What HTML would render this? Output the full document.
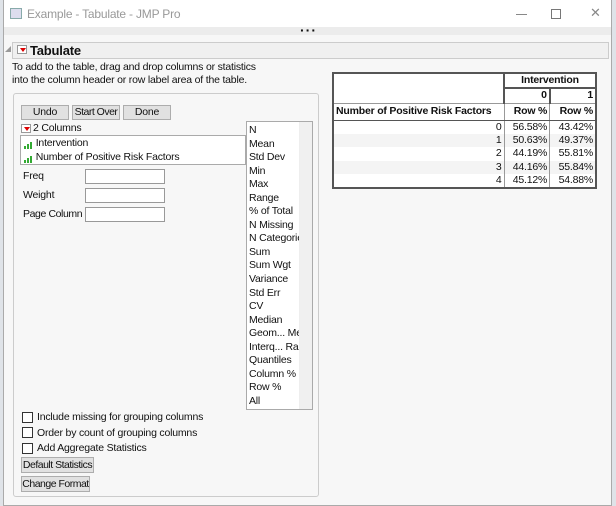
<!DOCTYPE html>
<html><head><style>
*{box-sizing:border-box;margin:0;padding:0}
body{width:616px;height:506px;overflow:hidden;background:#dfe3e8;font-family:"Liberation Sans",sans-serif;font-size:10.5px;color:#111;position:relative;letter-spacing:-0.2px}
.a{position:absolute;white-space:nowrap}
.win{left:3px;top:0;width:609px;height:506px;background:#f7f7f7;border:1px solid #aaa;border-top:none}
.btn{position:absolute;background:#e1e1e1;border:1px solid #adadad;text-align:center;line-height:13px;font-size:10.5px;white-space:nowrap;overflow:hidden}
.inp{position:absolute;background:#fff;border:1px solid #999;width:80px;height:15px;left:85px}
.cb{position:absolute;left:22px;width:11px;height:11px;border:1px solid #333;background:#fff}
.tri{position:absolute;width:10px;height:9px;background:#fff;border:1px solid #999}
.tri:after{content:"";position:absolute;left:1.5px;top:2px;border-left:3px solid transparent;border-right:3px solid transparent;border-top:4px solid #d00}
.bar{display:inline-block;vertical-align:bottom;background:#3a3;width:2px;margin-right:1px}
table{border-collapse:collapse;font-size:10.5px}
td{padding:0 2px;text-align:right;height:13.6px;line-height:13px;white-space:nowrap}
</style></head><body>
<div class="a win"></div>
<div class="a" style="left:4px;top:0;width:607px;height:27px;background:#fff"></div>
<div class="a" style="left:10px;top:8px;width:12px;height:11px;border:1px solid #8aa;background:#dde"></div>
<div class="a" style="left:27px;top:7px;color:#999;font-size:12px">Example - Tabulate - JMP Pro</div>
<div class="a" style="left:516px;top:14px;width:11px;height:1px;background:#888"></div>
<div class="a" style="left:551px;top:9px;width:10px;height:10px;border:1px solid #777"></div>
<div class="a" style="left:590px;top:5px;color:#888;font-size:13px">✕</div>
<div class="a" style="left:4px;top:27px;width:607px;height:8px;background:#ececec"></div>
<div class="a" style="left:300px;top:22px;font-size:14px;font-weight:bold;letter-spacing:1px">···</div>
<div class="a" style="left:5px;top:46px;border-left:6px solid transparent;border-bottom:6px solid #999;"></div>
<div class="a" style="left:12px;top:42px;width:597px;height:17px;background:#f0f0f0;border:1px solid #ccc"></div>
<div class="tri" style="left:17px;top:45px"></div>
<div class="a" style="left:30px;top:43px;font-weight:bold;font-size:13px">Tabulate</div>
<div class="a" style="left:12px;top:61px;line-height:13px">To add to the table, drag and drop columns or statistics<br>into the column header or row label area of the table.</div>
<div class="a" style="left:13px;top:93px;width:306px;height:404px;border:1px solid #ccc;border-radius:3px"></div>
<div class="btn" style="left:21px;top:105px;width:48px;height:15px">Undo</div>
<div class="btn" style="left:72px;top:105px;width:48px;height:15px;letter-spacing:-0.5px">Start Over</div>
<div class="btn" style="left:123px;top:105px;width:48px;height:15px">Done</div>
<div class="tri" style="left:21px;top:124px"></div>
<div class="a" style="left:33px;top:122px">2 Columns</div>
<div class="a" style="left:20px;top:135px;width:226px;height:30px;background:#fff;border:1px solid #aaa"></div>
<div class="a" style="left:24px;top:137px"><span class="bar" style="height:3px"></span><span class="bar" style="height:5px"></span><span class="bar" style="height:7px"></span> Intervention</div>
<div class="a" style="left:24px;top:151px"><span class="bar" style="height:3px"></span><span class="bar" style="height:5px"></span><span class="bar" style="height:7px"></span> Number of Positive Risk Factors</div>
<div class="a" style="left:23px;top:170px">Freq</div><div class="inp" style="top:169px"></div>
<div class="a" style="left:23px;top:189px">Weight</div><div class="inp" style="top:188px"></div>
<div class="a" style="left:23px;top:208px;letter-spacing:-0.4px">Page Column</div><div class="inp" style="top:207px"></div>
<div class="a" style="left:246px;top:121px;width:67px;height:289px;background:#fff;border:1px solid #aaa;overflow:hidden">
<div style="position:absolute;left:2px;top:2px;line-height:13.55px;white-space:nowrap">N<br>Mean<br>Std Dev<br>Min<br>Max<br>Range<br>% of Total<br>N Missing<br>N Categories<br>Sum<br>Sum Wgt<br>Variance<br>Std Err<br>CV<br>Median<br>Geom... Mean<br>Interq... Range<br>Quantiles<br>Column %<br>Row %<br>All</div>
<div style="position:absolute;right:0;top:0;width:13px;height:100%;background:#f0f0f0;border-left:1px solid #eee"></div>
</div>
<div class="cb" style="top:412px"></div><div class="a" style="left:37px;top:411px">Include missing for grouping columns</div>
<div class="cb" style="top:427px"></div><div class="a" style="left:37px;top:427px">Order by count of grouping columns</div>
<div class="cb" style="top:443px"></div><div class="a" style="left:37px;top:442px">Add Aggregate Statistics</div>
<div class="btn" style="left:21px;top:457px;width:73px;height:16px;line-height:14px;letter-spacing:-0.5px">Default Statistics</div>
<div class="btn" style="left:21px;top:476px;width:69px;height:16px;line-height:14px;letter-spacing:-0.5px">Change Format</div>
<table class="a" style="left:332px;top:72px;width:265px;border:2px solid #555;background:#fff">
<tr style="height:14px"><td rowspan="2" style="width:171px;border-right:2px solid #555;border-bottom:1px solid #999"></td><td colspan="2" style="text-align:center;font-weight:bold;border-bottom:2px solid #555">Intervention</td></tr>
<tr style="height:15px"><td style="font-weight:bold;border-right:2px solid #555;border-bottom:1px solid #999">0</td><td style="font-weight:bold;border-bottom:1px solid #999">1</td></tr>
<tr style="height:17px"><td style="text-align:left;font-weight:bold;border-right:1px solid #999;border-bottom:1px solid #555">Number of Positive Risk Factors</td><td style="font-weight:bold;border-right:1px solid #999;border-bottom:1px solid #555">Row %</td><td style="font-weight:bold;border-bottom:1px solid #555">Row %</td></tr>
<tr><td style="border-right:1px solid #999">0</td><td style="border-right:1px solid #999">56.58%</td><td>43.42%</td></tr>
<tr style="background:#f4f4f4"><td style="border-right:1px solid #999">1</td><td style="border-right:1px solid #999">50.63%</td><td>49.37%</td></tr>
<tr><td style="border-right:1px solid #999">2</td><td style="border-right:1px solid #999">44.19%</td><td>55.81%</td></tr>
<tr style="background:#f4f4f4"><td style="border-right:1px solid #999">3</td><td style="border-right:1px solid #999">44.16%</td><td>55.84%</td></tr>
<tr><td style="border-right:1px solid #999">4</td><td style="border-right:1px solid #999">45.12%</td><td>54.88%</td></tr>
</table>
</body></html>
